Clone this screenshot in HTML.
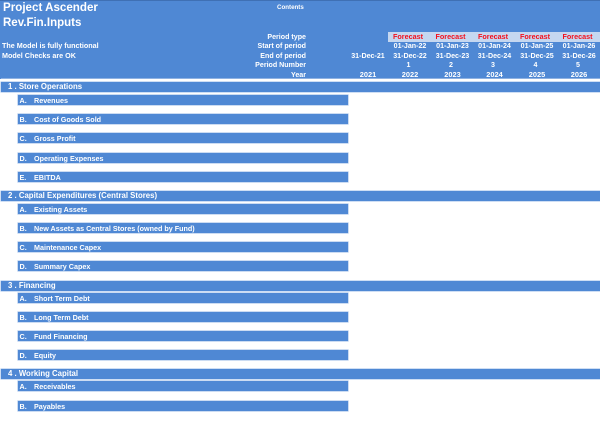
<!DOCTYPE html>
<html>
<head>
<meta charset="utf-8">
<style>
html,body{margin:0;padding:0;background:#fff;}
#p{position:relative;width:600px;height:422px;overflow:hidden;background:#fff;font-family:"Liberation Sans",sans-serif;font-weight:bold;color:#fff;filter:blur(0.25px);}
#p div{position:absolute;white-space:nowrap;}
.s{left:1px;width:599px;height:10px;background:#4f88d4;box-shadow:0 0 0 .5px #9dbde8;font-size:7.8px;line-height:10.5px;}
.s span{position:absolute;left:7px;}
.b{left:18px;width:330px;height:10px;background:#4f88d4;box-shadow:0 0 0 .6px #a9c5ea;font-size:7.2px;line-height:11px;}
.b i{position:absolute;left:1.5px;font-style:normal;}
.b u{position:absolute;left:16px;text-decoration:none;}
.l{right:294px;font-size:7.1px;line-height:9px;text-align:right;}
.c{width:42px;text-align:center;font-size:7.1px;line-height:9px;}
.y{font-size:7.4px;}
.f{color:#f40f1c;font-size:7.2px;}
</style>
</head>
<body>
<div id="p">
<div style="left:0;top:0;width:600px;height:79px;background:#4f88d4;border-top:1px solid #3f70b4;box-sizing:border-box;"></div>
<div style="left:1px;top:78px;width:599px;height:1px;background:#8fb2e2;"></div>
<div style="left:3px;top:1px;font-size:11.6px;line-height:14px;">Project Ascender</div>
<div style="left:3px;top:15.5px;font-size:11.5px;line-height:14px;">Rev.Fin.Inputs</div>
<div style="left:277px;top:3.5px;font-size:6.2px;line-height:8px;">Contents</div>
<div style="left:2px;top:41px;font-size:7.2px;line-height:9px;">The Model is fully functional</div>
<div style="left:2px;top:50.5px;font-size:7.2px;line-height:9px;">Model Checks are OK</div>

<div class="l" style="top:32.5px;">Period type</div>
<div class="l" style="top:41.5px;">Start of period</div>
<div class="l" style="top:52px;">End of period</div>
<div class="l" style="top:60.5px;">Period Number</div>
<div class="l" style="top:71px;">Year</div>

<div style="left:388px;top:31.5px;width:212px;height:10px;background:#c5d7f0;"></div>
<div class="c f" style="left:387px;top:32px;">Forecast</div>
<div class="c f" style="left:429.5px;top:32px;">Forecast</div>
<div class="c f" style="left:472px;top:32px;">Forecast</div>
<div class="c f" style="left:514px;top:32px;">Forecast</div>
<div class="c f" style="left:556.5px;top:32px;">Forecast</div>

<div class="c" style="left:389px;top:41.5px;">01-Jan-22</div>
<div class="c" style="left:431.5px;top:41.5px;">01-Jan-23</div>
<div class="c" style="left:473.5px;top:41.5px;">01-Jan-24</div>
<div class="c" style="left:516px;top:41.5px;">01-Jan-25</div>
<div class="c" style="left:558px;top:41.5px;">01-Jan-26</div>

<div class="c" style="left:347px;top:52px;">31-Dec-21</div>
<div class="c" style="left:389px;top:52px;">31-Dec-22</div>
<div class="c" style="left:431.5px;top:52px;">31-Dec-23</div>
<div class="c" style="left:473.5px;top:52px;">31-Dec-24</div>
<div class="c" style="left:516px;top:52px;">31-Dec-25</div>
<div class="c" style="left:558px;top:52px;">31-Dec-26</div>

<div class="c" style="left:387.5px;top:60.5px;">1</div>
<div class="c" style="left:430px;top:60.5px;">2</div>
<div class="c" style="left:472px;top:60.5px;">3</div>
<div class="c" style="left:514.5px;top:60.5px;">4</div>
<div class="c" style="left:557px;top:60.5px;">5</div>

<div class="c y" style="left:347px;top:70px;">2021</div>
<div class="c y" style="left:389px;top:70px;">2022</div>
<div class="c y" style="left:431.5px;top:70px;">2023</div>
<div class="c y" style="left:473.5px;top:70px;">2024</div>
<div class="c y" style="left:516px;top:70px;">2025</div>
<div class="c y" style="left:558px;top:70px;">2026</div>

<div class="s" style="top:82px;"><span>1 . Store Operations</span></div>
<div class="b" style="top:94.5px;"><i>A.</i><u>Revenues</u></div>
<div class="b" style="top:113.5px;"><i>B.</i><u>Cost of Goods Sold</u></div>
<div class="b" style="top:133px;"><i>C.</i><u>Gross Profit</u></div>
<div class="b" style="top:152.5px;"><i>D.</i><u>Operating Expenses</u></div>
<div class="b" style="top:171.5px;"><i>E.</i><u>EBITDA</u></div>

<div class="s" style="top:191px;"><span>2 . Capital Expenditures (Central Stores)</span></div>
<div class="b" style="top:203.5px;"><i>A.</i><u>Existing Assets</u></div>
<div class="b" style="top:223px;"><i>B.</i><u>New Assets as Central Stores (owned by Fund)</u></div>
<div class="b" style="top:242px;"><i>C.</i><u>Maintenance Capex</u></div>
<div class="b" style="top:261px;"><i>D.</i><u>Summary Capex</u></div>

<div class="s" style="top:280.5px;"><span>3 . Financing</span></div>
<div class="b" style="top:293px;"><i>A.</i><u>Short Term Debt</u></div>
<div class="b" style="top:312px;"><i>B.</i><u>Long Term Debt</u></div>
<div class="b" style="top:330.5px;"><i>C.</i><u>Fund Financing</u></div>
<div class="b" style="top:349.5px;"><i>D.</i><u>Equity</u></div>

<div class="s" style="top:368.5px;"><span>4 . Working Capital</span></div>
<div class="b" style="top:381px;"><i>A.</i><u>Receivables</u></div>
<div class="b" style="top:400.5px;"><i>B.</i><u>Payables</u></div>
</div>
</body>
</html>
